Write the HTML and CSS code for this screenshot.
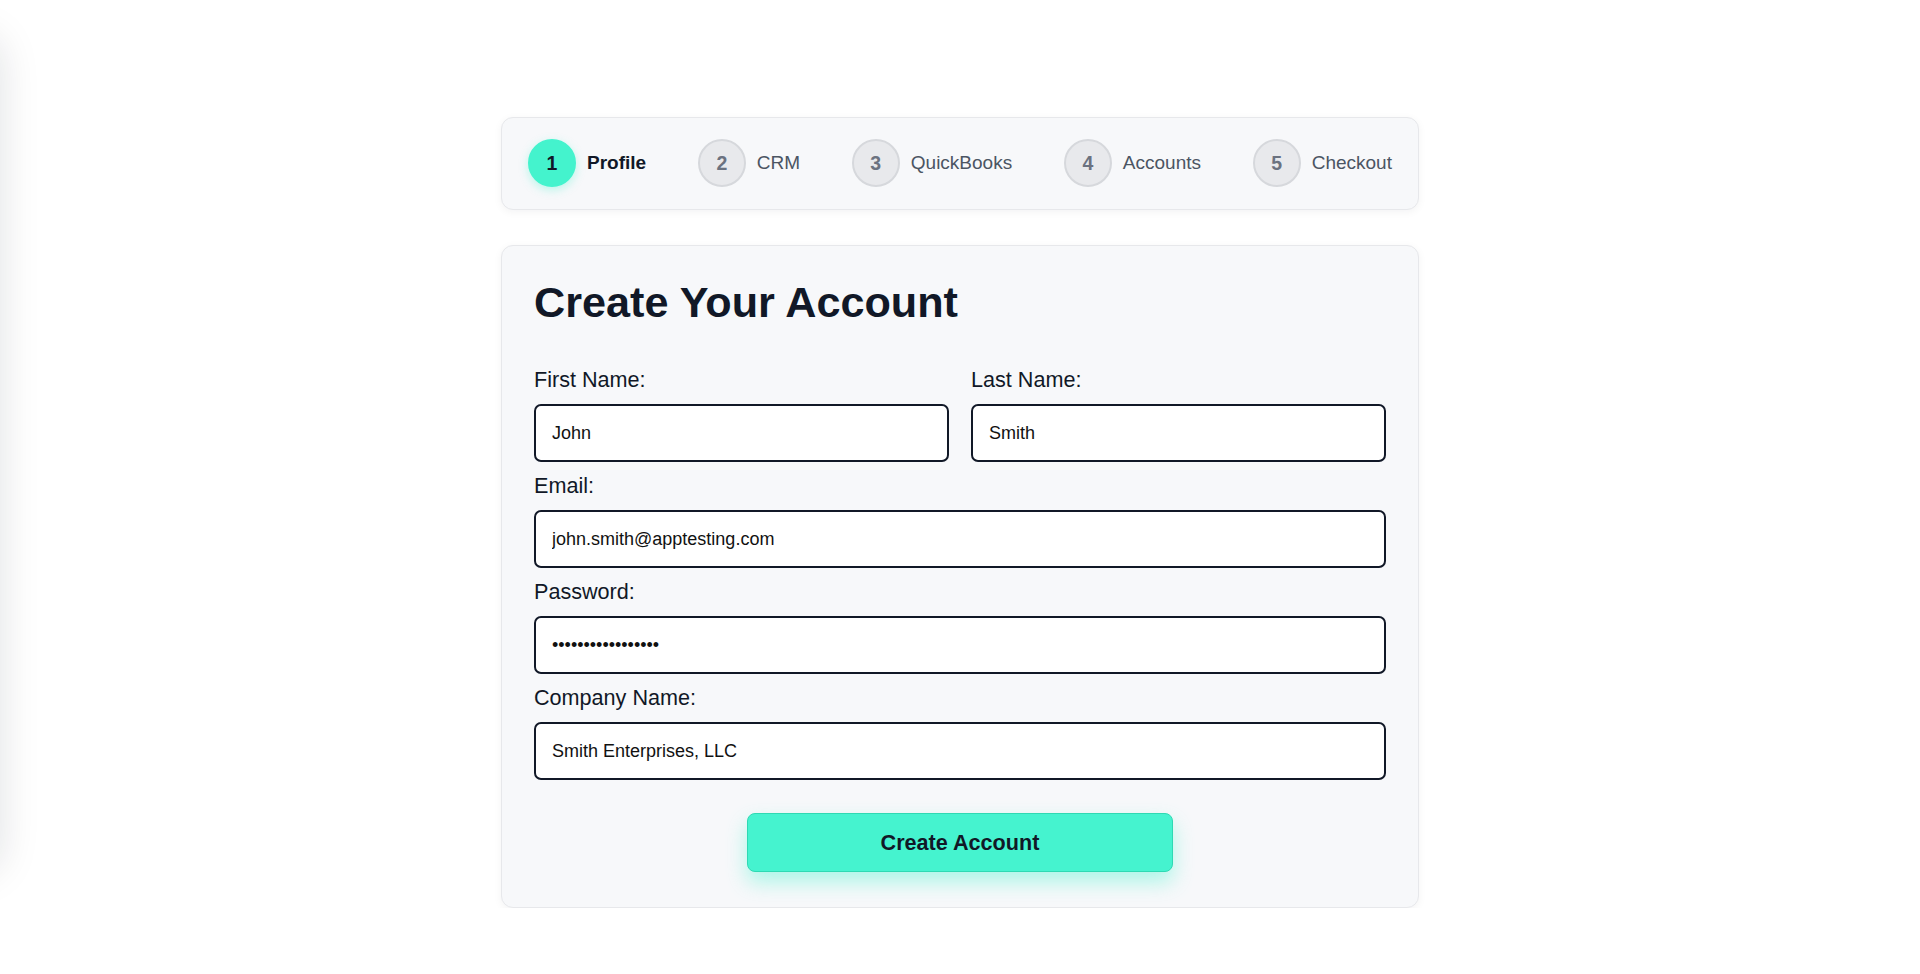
FILE: index.html
```html
<!DOCTYPE html>
<html lang="en">
<head>
<meta charset="utf-8">
<title>Create Your Account</title>
<link rel="stylesheet" href="styles.css">
</head>
<body>
<div class="side-panel"></div>
<main class="wrap">
  <nav class="stepper">
    <div class="step active"><span class="num">1</span><span class="label">Profile</span></div>
    <div class="step"><span class="num">2</span><span class="label">CRM</span></div>
    <div class="step"><span class="num">3</span><span class="label">QuickBooks</span></div>
    <div class="step"><span class="num">4</span><span class="label">Accounts</span></div>
    <div class="step"><span class="num">5</span><span class="label">Checkout</span></div>
  </nav>
  <section class="card">
    <h1 class="title">Create Your Account</h1>
    <form class="form">
      <div class="row">
        <div class="group">
          <label class="lbl" for="fn">First Name:</label>
          <input class="inp" id="fn" type="text" value="John">
        </div>
        <div class="group">
          <label class="lbl" for="ln">Last Name:</label>
          <input class="inp" id="ln" type="text" value="Smith">
        </div>
      </div>
      <div class="group">
        <label class="lbl" for="em">Email:</label>
        <input class="inp" id="em" type="email" value="john.smith@apptesting.com">
      </div>
      <div class="group">
        <label class="lbl" for="pw">Password:</label>
        <input class="inp" id="pw" type="password" value="Password123456789">
      </div>
      <div class="group">
        <label class="lbl" for="co">Company Name:</label>
        <input class="inp" id="co" type="text" value="Smith Enterprises, LLC">
      </div>
      <div class="actions">
        <button class="btn" type="button">Create Account</button>
      </div>
    </form>
  </section>
</main>
</body>
</html>
```
FILE: styles.css
```css
html, body {
  margin: 0;
  padding: 0;
  background: #ffffff;
}
body {
  font-family: "Liberation Sans", Arial, Helvetica, sans-serif;
  font-size: 18px;
  color: #111827;
  overflow: hidden;
}
.side-panel {
  position: fixed;
  left: -300px;
  top: 36px;
  width: 300px;
  height: 836px;
  border-radius: 24px;
  background: #eef0f3;
  box-shadow: 0 0 40px rgba(17, 24, 39, 0.13);
}
.wrap {
  width: 918px;
  margin: 117px auto 0;
}
.stepper {
  display: flex;
  justify-content: space-between;
  align-items: center;
  padding: 21px 26px 22px;
  background: #f7f8fa;
  border: 1px solid #e7e8eb;
  border-radius: 12px;
  box-shadow: 0 2px 8px rgba(17, 24, 39, 0.05);
}
.step {
  display: flex;
  align-items: center;
  gap: 11px;
}
.num {
  box-sizing: border-box;
  width: 48px;
  height: 48px;
  border-radius: 50%;
  display: flex;
  align-items: center;
  justify-content: center;
  font-size: 19.5px;
  font-weight: bold;
  color: #6b7280;
  background: #e8e9ec;
  border: 2px solid #d6d8dc;
}
.label {
  font-size: 19px;
  color: #4b5563;
}
.step.active .num {
  background: #44f3cd;
  border-color: #44f3cd;
  color: #111827;
  box-shadow: 0 3px 10px rgba(68, 243, 205, 0.35);
}
.step.active .label {
  font-weight: bold;
  color: #111827;
}
.card {
  margin-top: 35px;
  padding: 32px 32px 35px;
  background: #f7f8fa;
  border: 1px solid #e7e8eb;
  border-radius: 12px;
  box-shadow: 0 2px 8px rgba(17, 24, 39, 0.05);
}
.title {
  margin: 0 0 41px;
  font-size: 43.2px;
  line-height: 48px;
  font-weight: bold;
  color: #111827;
}
.form {
  margin: 0;
}
.row {
  display: grid;
  grid-template-columns: 1fr 1fr;
  gap: 22px;
}
.group {
  display: flex;
  flex-direction: column;
  margin-bottom: 11px;
}
.lbl {
  font-size: 21.6px;
  line-height: 25px;
  margin-bottom: 12px;
  color: #111827;
}
.inp {
  box-sizing: border-box;
  width: 100%;
  height: 58px;
  margin: 0;
  padding: 16px 16px;
  font-family: "Liberation Sans", Arial, Helvetica, sans-serif;
  font-size: 18px;
  line-height: 22px;
  color: #111111;
  background: #ffffff;
  border: 2px solid #111827;
  border-radius: 7px;
  outline: none;
}
.actions {
  display: flex;
  justify-content: center;
  margin-top: 33px;
}
.btn {
  box-sizing: border-box;
  width: 50%;
  height: 59px;
  padding: 16px;
  font-family: "Liberation Sans", Arial, Helvetica, sans-serif;
  font-size: 21.6px;
  line-height: 25px;
  font-weight: bold;
  color: #111827;
  background: #45f3cf;
  border: 1px solid #2fd9b3;
  border-radius: 8px;
  box-shadow: 0 10px 20px rgba(69, 243, 207, 0.42);
  cursor: pointer;
}
```
